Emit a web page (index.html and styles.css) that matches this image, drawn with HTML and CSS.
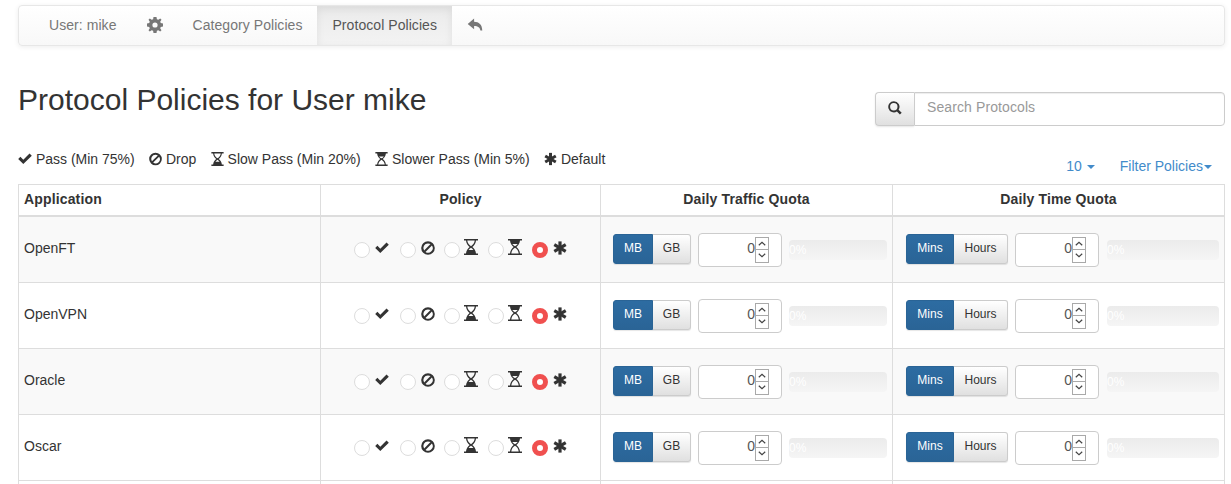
FILE: index.html
```html
<!DOCTYPE html>
<html lang="en">
<head>
  <meta charset="UTF-8">
  <title>Protocol Policies</title>
  <link rel="stylesheet" href="styles.css">
</head>
<body>
  <!-- Icon set -->
  <svg class="icon-defs" width="0" height="0">
    <symbol id="i-ok" viewBox="0 0 14 14"><path d="M0.2 7 2.4 4.8 5.3 7.7 11.5 1.5 13.8 3.7 5.3 12Z"/></symbol>
    <symbol id="i-ban" viewBox="0 0 14 14"><path fill-rule="evenodd" d="M7 0.2A6.8 6.8 0 1 0 7 13.8 6.8 6.8 0 1 0 7 0.2ZM7 2.4A4.6 4.6 0 0 1 9.5 3.1L3.1 9.5A4.6 4.6 0 0 1 7 2.4ZM10.9 4.5A4.6 4.6 0 0 1 4.5 10.9Z"/></symbol>
    <symbol id="i-slow" viewBox="0 0 14 16"><path fill-rule="evenodd" d="M0 0H14V1.6H12C11.8 4.5 10.2 6.5 8.4 8 10.2 9.5 11.8 11.5 12 14.4H14V16H0V14.4H2C2.2 11.5 3.8 9.5 5.6 8 3.8 6.5 2.2 4.5 2 1.6H0ZM3.3 1.6C3.5 4 5 6 7 7.2 9 6 10.5 4 10.7 1.6ZM7 8.8C6 9.5 5.2 10.2 4.6 11H9.4C8.8 10.2 8 9.5 7 8.8Z"/></symbol>
    <symbol id="i-slower" viewBox="0 0 14 16"><path fill-rule="evenodd" d="M0 0H14V1.6H12C11.8 4.5 10.2 6.5 8.4 8 10.2 9.5 11.8 11.5 12 14.4H14V16H0V14.4H2C2.2 11.5 3.8 9.5 5.6 8 3.8 6.5 2.2 4.5 2 1.6H0ZM4.3 5C5 6 6 6.7 7 7.2 8 6.7 9 6 9.7 5ZM7 8.8C5 10 3.5 12 3.3 14.4H10.7C10.5 12 9 10 7 8.8Z"/></symbol>
    <symbol id="i-star" viewBox="0 0 14 14"><g transform="translate(7 7)"><rect x="-1.6" y="-6.6" width="3.2" height="13.2"/><rect x="-1.6" y="-6.6" width="3.2" height="13.2" transform="rotate(60)"/><rect x="-1.6" y="-6.6" width="3.2" height="13.2" transform="rotate(120)"/></g></symbol>
    <symbol id="i-cog" viewBox="0 0 16 16"><path fill-rule="evenodd" d="M6.5 0H9.5L9.9 2.2 11.3 2.8 13.2 1.5 14.5 2.8 13.2 4.7 13.8 6.1 16 6.5V9.5L13.8 9.9 13.2 11.3 14.5 13.2 13.2 14.5 11.3 13.2 9.9 13.8 9.5 16H6.5L6.1 13.8 4.7 13.2 2.8 14.5 1.5 13.2 2.8 11.3 2.2 9.9 0 9.5V6.5L2.2 6.1 2.8 4.7 1.5 2.8 2.8 1.5 4.7 2.8 6.1 2.2ZM8 5.4A2.6 2.6 0 1 0 8 10.6 2.6 2.6 0 1 0 8 5.4Z"/></symbol>
    <symbol id="i-back" viewBox="0 0 15 13"><path d="M6.6 0.5V3.8C11.5 3.8 14.6 6.6 14.8 12.5H12.9C12.5 9.6 10.6 8 6.6 8V11.3L0.2 5.9Z"/></symbol>
    <symbol id="i-search" viewBox="0 0 14 14"><path fill-rule="evenodd" d="M5.8 0.2A5.6 5.6 0 1 0 8.9 10.5L11.9 13.6 13.7 11.8 10.6 8.8A5.6 5.6 0 0 0 5.8 0.2ZM5.8 2.1A3.7 3.7 0 1 1 5.8 9.5 3.7 3.7 0 1 1 5.8 2.1Z"/></symbol>
    <symbol id="i-up" viewBox="0 0 8 5"><path d="M0.8 4.2 4 1.2 7.2 4.2" fill="none" stroke="#444" stroke-width="1.2"/></symbol>
    <symbol id="i-down" viewBox="0 0 8 5"><path d="M0.8 0.8 4 3.8 7.2 0.8" fill="none" stroke="#444" stroke-width="1.2"/></symbol>
  </svg>

  <!-- Top navigation -->
  <nav class="navbar">
    <ul class="nav-list">
      <li><a href="#">User: mike</a></li>
      <li><a href="#"><svg class="nav-icon"><use href="#i-cog"/></svg></a></li>
      <li><a href="#">Category Policies</a></li>
      <li class="active"><a href="#">Protocol Policies</a></li>
      <li><a href="#"><svg class="nav-icon nav-back"><use href="#i-back"/></svg></a></li>
    </ul>
  </nav>

  <!-- Title and search -->
  <div class="page-head">
    <h2>Protocol Policies for User mike</h2>
    <div class="search-group">
      <span class="search-addon"><svg class="search-icon"><use href="#i-search"/></svg></span>
      <input type="text" class="search-input" placeholder="Search Protocols">
    </div>
  </div>

  <!-- Legend and filters -->
  <div class="legend-bar">
    <div class="legend">
      <span><svg class="icon icon-first"><use href="#i-ok"/></svg> Pass (Min 75%)</span>
      <span><svg class="icon"><use href="#i-ban"/></svg> Drop</span>
      <span><svg class="icon"><use href="#i-slow"/></svg> Slow Pass (Min 20%)</span>
      <span><svg class="icon"><use href="#i-slower"/></svg> Slower Pass (Min 5%)</span>
      <span><svg class="icon"><use href="#i-star"/></svg> Default</span>
    </div>
    <div class="filters">
      <a href="#">10 <span class="caret"></span></a>
      <a href="#">Filter Policies<span class="caret"></span></a>
    </div>
  </div>

  <!-- Policies table -->
  <table class="policies">
    <thead>
      <tr>
        <th class="col-app">Application</th>
        <th class="col-policy">Policy</th>
        <th class="col-traffic">Daily Traffic Quota</th>
        <th>Daily Time Quota</th>
      </tr>
    </thead>
    <tbody>
      <tr>
        <td class="app-cell">OpenFT</td>
        <td class="policy-cell">
          <label class="opt"><input type="radio" name="p1"><svg class="icon"><use href="#i-ok"/></svg></label>
          <label class="opt"><input type="radio" name="p1"><svg class="icon"><use href="#i-ban"/></svg></label>
          <label class="opt"><input type="radio" name="p1"><svg class="icon tall"><use href="#i-slow"/></svg></label>
          <label class="opt"><input type="radio" name="p1"><svg class="icon tall"><use href="#i-slower"/></svg></label>
          <label class="opt"><input type="radio" name="p1" checked><svg class="icon"><use href="#i-star"/></svg></label>
        </td>
        <td>
          <div class="quota">
            <div class="btn-group"><button class="btn on mb">MB</button><button class="btn gb">GB</button></div>
            <div class="num"><input type="number" value="0"><span class="spin"><i><svg><use href="#i-up"/></svg></i><i><svg><use href="#i-down"/></svg></i></span></div>
            <div class="progress"><span>0%</span></div>
          </div>
        </td>
        <td>
          <div class="quota time">
            <div class="btn-group"><button class="btn on mins">Mins</button><button class="btn hours">Hours</button></div>
            <div class="num"><input type="number" value="0"><span class="spin"><i><svg><use href="#i-up"/></svg></i><i><svg><use href="#i-down"/></svg></i></span></div>
            <div class="progress"><span>0%</span></div>
          </div>
        </td>
      </tr>
      <tr>
        <td class="app-cell">OpenVPN</td>
        <td class="policy-cell">
          <label class="opt"><input type="radio" name="p2"><svg class="icon"><use href="#i-ok"/></svg></label>
          <label class="opt"><input type="radio" name="p2"><svg class="icon"><use href="#i-ban"/></svg></label>
          <label class="opt"><input type="radio" name="p2"><svg class="icon tall"><use href="#i-slow"/></svg></label>
          <label class="opt"><input type="radio" name="p2"><svg class="icon tall"><use href="#i-slower"/></svg></label>
          <label class="opt"><input type="radio" name="p2" checked><svg class="icon"><use href="#i-star"/></svg></label>
        </td>
        <td>
          <div class="quota">
            <div class="btn-group"><button class="btn on mb">MB</button><button class="btn gb">GB</button></div>
            <div class="num"><input type="number" value="0"><span class="spin"><i><svg><use href="#i-up"/></svg></i><i><svg><use href="#i-down"/></svg></i></span></div>
            <div class="progress"><span>0%</span></div>
          </div>
        </td>
        <td>
          <div class="quota time">
            <div class="btn-group"><button class="btn on mins">Mins</button><button class="btn hours">Hours</button></div>
            <div class="num"><input type="number" value="0"><span class="spin"><i><svg><use href="#i-up"/></svg></i><i><svg><use href="#i-down"/></svg></i></span></div>
            <div class="progress"><span>0%</span></div>
          </div>
        </td>
      </tr>
      <tr>
        <td class="app-cell">Oracle</td>
        <td class="policy-cell">
          <label class="opt"><input type="radio" name="p3"><svg class="icon"><use href="#i-ok"/></svg></label>
          <label class="opt"><input type="radio" name="p3"><svg class="icon"><use href="#i-ban"/></svg></label>
          <label class="opt"><input type="radio" name="p3"><svg class="icon tall"><use href="#i-slow"/></svg></label>
          <label class="opt"><input type="radio" name="p3"><svg class="icon tall"><use href="#i-slower"/></svg></label>
          <label class="opt"><input type="radio" name="p3" checked><svg class="icon"><use href="#i-star"/></svg></label>
        </td>
        <td>
          <div class="quota">
            <div class="btn-group"><button class="btn on mb">MB</button><button class="btn gb">GB</button></div>
            <div class="num"><input type="number" value="0"><span class="spin"><i><svg><use href="#i-up"/></svg></i><i><svg><use href="#i-down"/></svg></i></span></div>
            <div class="progress"><span>0%</span></div>
          </div>
        </td>
        <td>
          <div class="quota time">
            <div class="btn-group"><button class="btn on mins">Mins</button><button class="btn hours">Hours</button></div>
            <div class="num"><input type="number" value="0"><span class="spin"><i><svg><use href="#i-up"/></svg></i><i><svg><use href="#i-down"/></svg></i></span></div>
            <div class="progress"><span>0%</span></div>
          </div>
        </td>
      </tr>
      <tr>
        <td class="app-cell">Oscar</td>
        <td class="policy-cell">
          <label class="opt"><input type="radio" name="p4"><svg class="icon"><use href="#i-ok"/></svg></label>
          <label class="opt"><input type="radio" name="p4"><svg class="icon"><use href="#i-ban"/></svg></label>
          <label class="opt"><input type="radio" name="p4"><svg class="icon tall"><use href="#i-slow"/></svg></label>
          <label class="opt"><input type="radio" name="p4"><svg class="icon tall"><use href="#i-slower"/></svg></label>
          <label class="opt"><input type="radio" name="p4" checked><svg class="icon"><use href="#i-star"/></svg></label>
        </td>
        <td>
          <div class="quota">
            <div class="btn-group"><button class="btn on mb">MB</button><button class="btn gb">GB</button></div>
            <div class="num"><input type="number" value="0"><span class="spin"><i><svg><use href="#i-up"/></svg></i><i><svg><use href="#i-down"/></svg></i></span></div>
            <div class="progress"><span>0%</span></div>
          </div>
        </td>
        <td>
          <div class="quota time">
            <div class="btn-group"><button class="btn on mins">Mins</button><button class="btn hours">Hours</button></div>
            <div class="num"><input type="number" value="0"><span class="spin"><i><svg><use href="#i-up"/></svg></i><i><svg><use href="#i-down"/></svg></i></span></div>
            <div class="progress"><span>0%</span></div>
          </div>
        </td>
      </tr>
      <tr class="tail">
        <td></td><td></td><td></td><td></td>
      </tr>
    </tbody>
  </table>
</body>
</html>
```

FILE: styles.css
```css
/* General Page Styling */
html {
  overflow: hidden;
}

body {
  height: 100vh;
  box-sizing: border-box;
  overflow: hidden;
  margin: 0;
  padding: 5px 6px 0 18px;
  font-family: "Liberation Sans", Arial, sans-serif;
  font-size: 14px;
  line-height: 20px;
  color: #333;
  background: #fff;
}

a {
  text-decoration: none;
}

.icon-defs {
  position: absolute;
}

svg {
  fill: currentColor;
}

.icon {
  width: 14px;
  height: 14px;
  vertical-align: -2px;
}

/* Navbar */
.navbar {
  height: 41px;
  box-sizing: border-box;
  border: 1px solid #e7e7e7;
  border-radius: 4px;
  background: linear-gradient(to bottom, #fff, #f8f8f8);
  box-shadow: inset 0 1px 0 rgba(255, 255, 255, 0.15), 0 1px 5px rgba(0, 0, 0, 0.075);
}

.nav-list {
  display: flex;
  margin: 0;
  padding: 0 0 0 15px;
  list-style: none;
}

.nav-list a {
  display: flex;
  align-items: center;
  height: 39px;
  box-sizing: border-box;
  padding: 0 15px 2px;
  letter-spacing: 0.06px;
  color: #777;
}

.nav-list .active a {
  color: #555;
  background: linear-gradient(to bottom, #ebebeb, #f3f3f3);
  box-shadow: inset 0 3px 9px rgba(0, 0, 0, 0.075);
}

.nav-icon {
  width: 16px;
  height: 16px;
}

.nav-back {
  height: 13px;
}

/* Title row */
.page-head {
  display: flex;
  justify-content: space-between;
  height: 83px;
}

h2 {
  margin: 37px 0 0;
  font-size: 30px;
  font-weight: 500;
  line-height: 33px;
}

.search-group {
  display: flex;
  width: 350px;
  height: 34px;
  margin-top: 46px;
}

.search-addon {
  display: flex;
  align-items: center;
  justify-content: center;
  width: 39px;
  box-sizing: border-box;
  border: 1px solid #ccc;
  border-right: 0;
  border-radius: 4px 0 0 4px;
  background: linear-gradient(to bottom, #fff, #e0e0e0);
  box-shadow: 0 1px 2px rgba(0, 0, 0, 0.1);
}

.search-icon {
  width: 14px;
  height: 14px;
  margin-bottom: 2px;
}

.search-input {
  flex: 1;
  min-width: 0;
  padding: 0 12px 4px;
  border: 1px solid #ccc;
  border-radius: 0 4px 4px 0;
  font: inherit;
  letter-spacing: 0.1px;
  color: #555;
  box-shadow: inset 0 1px 1px rgba(0, 0, 0, 0.075);
}

.search-input::placeholder {
  color: #999;
}

/* Legend row */
.legend-bar {
  display: flex;
  justify-content: space-between;
  height: 55px;
}

.legend {
  display: flex;
  gap: 14.4px;
  padding-top: 20px;
}

.legend .icon {
  width: 13px;
}

.legend .icon-first {
  width: 14px;
}

.filters {
  display: flex;
  gap: 25px;
  padding: 27px 13px 0 0;
}

.filters a {
  color: #428bca;
}

.caret {
  display: inline-block;
  margin-left: 1px;
  vertical-align: middle;
  border-top: 4px solid;
  border-right: 4px solid transparent;
  border-left: 4px solid transparent;
}

/* Policies table */
.policies {
  width: 100%;
  table-layout: fixed;
  border-collapse: collapse;
  border: 1px solid #ddd;
}

.policies th,
.policies td {
  padding: 5px;
  border: 1px solid #ddd;
  vertical-align: middle;
}

.policies th {
  height: 20px;
  padding: 4px 5px 6px;
  text-align: center;
  letter-spacing: 0.15px;
  border-bottom-width: 2px;
}

.policies th.col-app {
  text-align: left;
  width: 291px;
}

.col-policy {
  width: 269px;
}

.col-traffic {
  width: 281px;
}

.policies tbody td {
  height: 55px;
}

.policies td.app-cell {
  padding: 3px 5px 7px;
}

.policies td.policy-cell {
  padding: 8px 5px 2px;
}

.policies tbody tr:nth-child(odd) {
  background: #f9f9f9;
}

/* Row cut off by the bottom of the window */
.policies tbody tr.tail {
  background: #fff;
}

.policies tbody .tail td {
  height: 3px;
  padding: 0;
  border-bottom: 0;
}

/* Radio options */
.policy-cell {
  text-align: center;
  white-space: nowrap;
}

.opt {
  display: inline-flex;
  align-items: flex-start;
  gap: 5px;
  margin-right: 5px;
}

.opt:first-child {
  margin-right: 7px;
}

.opt:last-child {
  margin-right: 0;
}

.opt .icon {
  margin-top: -1px;
}

.opt .tall {
  height: 16px;
  margin: -3px 1px 0 -1px;
}

.opt input {
  appearance: none;
  width: 16px;
  height: 16px;
  margin: 0;
  box-sizing: border-box;
  border: 1.5px solid #ddd;
  border-radius: 50%;
  background: #fff;
}

.opt input:checked {
  border: 5.5px solid #f0504f;
}

/* Quota controls */
.quota {
  display: flex;
  align-items: center;
  gap: 7px;
  padding-left: 7px;
}

.quota.time {
  padding-left: 8px;
}

.quota.time .progress {
  margin-left: 1px;
}

.btn-group {
  display: flex;
  height: 30px;
  margin-bottom: 2px;
}

.btn {
  padding: 0 0 2px;
  border: 1px solid #ccc;
  font: 12px "Liberation Sans", Arial, sans-serif;
  color: #333;
  background: linear-gradient(to bottom, #fff, #e0e0e0);
  box-shadow: 0 1px 1px rgba(0, 0, 0, 0.1);
}

.btn.on {
  border-color: #2a6496;
  color: #fff;
  background: linear-gradient(to bottom, #2d6ca2, #2a6496);
  border-radius: 3px 0 0 3px;
}

.mb {
  width: 40px;
}

.gb {
  width: 38px;
  border-left: 0;
  border-radius: 0 3px 3px 0;
}

.mins {
  width: 48px;
}

.hours {
  width: 54px;
  border-left: 0;
  border-radius: 0 3px 3px 0;
}

.num {
  display: flex;
  align-items: center;
  width: 84px;
  height: 34px;
  box-sizing: border-box;
  padding: 3px 12px;
  border: 1px solid #ccc;
  border-radius: 4px;
  background: #fff;
}

.num input {
  flex: 1;
  min-width: 0;
  margin-bottom: 3px;
  padding: 0;
  border: 0;
  font: inherit;
  color: #555;
  text-align: right;
  background: transparent;
  appearance: textfield;
}

.num input::-webkit-inner-spin-button {
  display: none;
}

.spin {
  display: flex;
  flex-direction: column;
  width: 14px;
  height: 26px;
}

.spin i {
  display: flex;
  align-items: center;
  justify-content: center;
  height: 14px;
  box-sizing: border-box;
  border: 1px solid #a9a9a9;
}

.spin i + i {
  margin-top: -1px;
}

.spin svg {
  width: 8px;
  height: 5px;
}

.progress {
  flex: 1;
  height: 20px;
  border-radius: 4px;
  font-size: 12px;
  color: #fff;
  background: linear-gradient(to bottom, #ebebeb, #f5f5f5);
}
```
